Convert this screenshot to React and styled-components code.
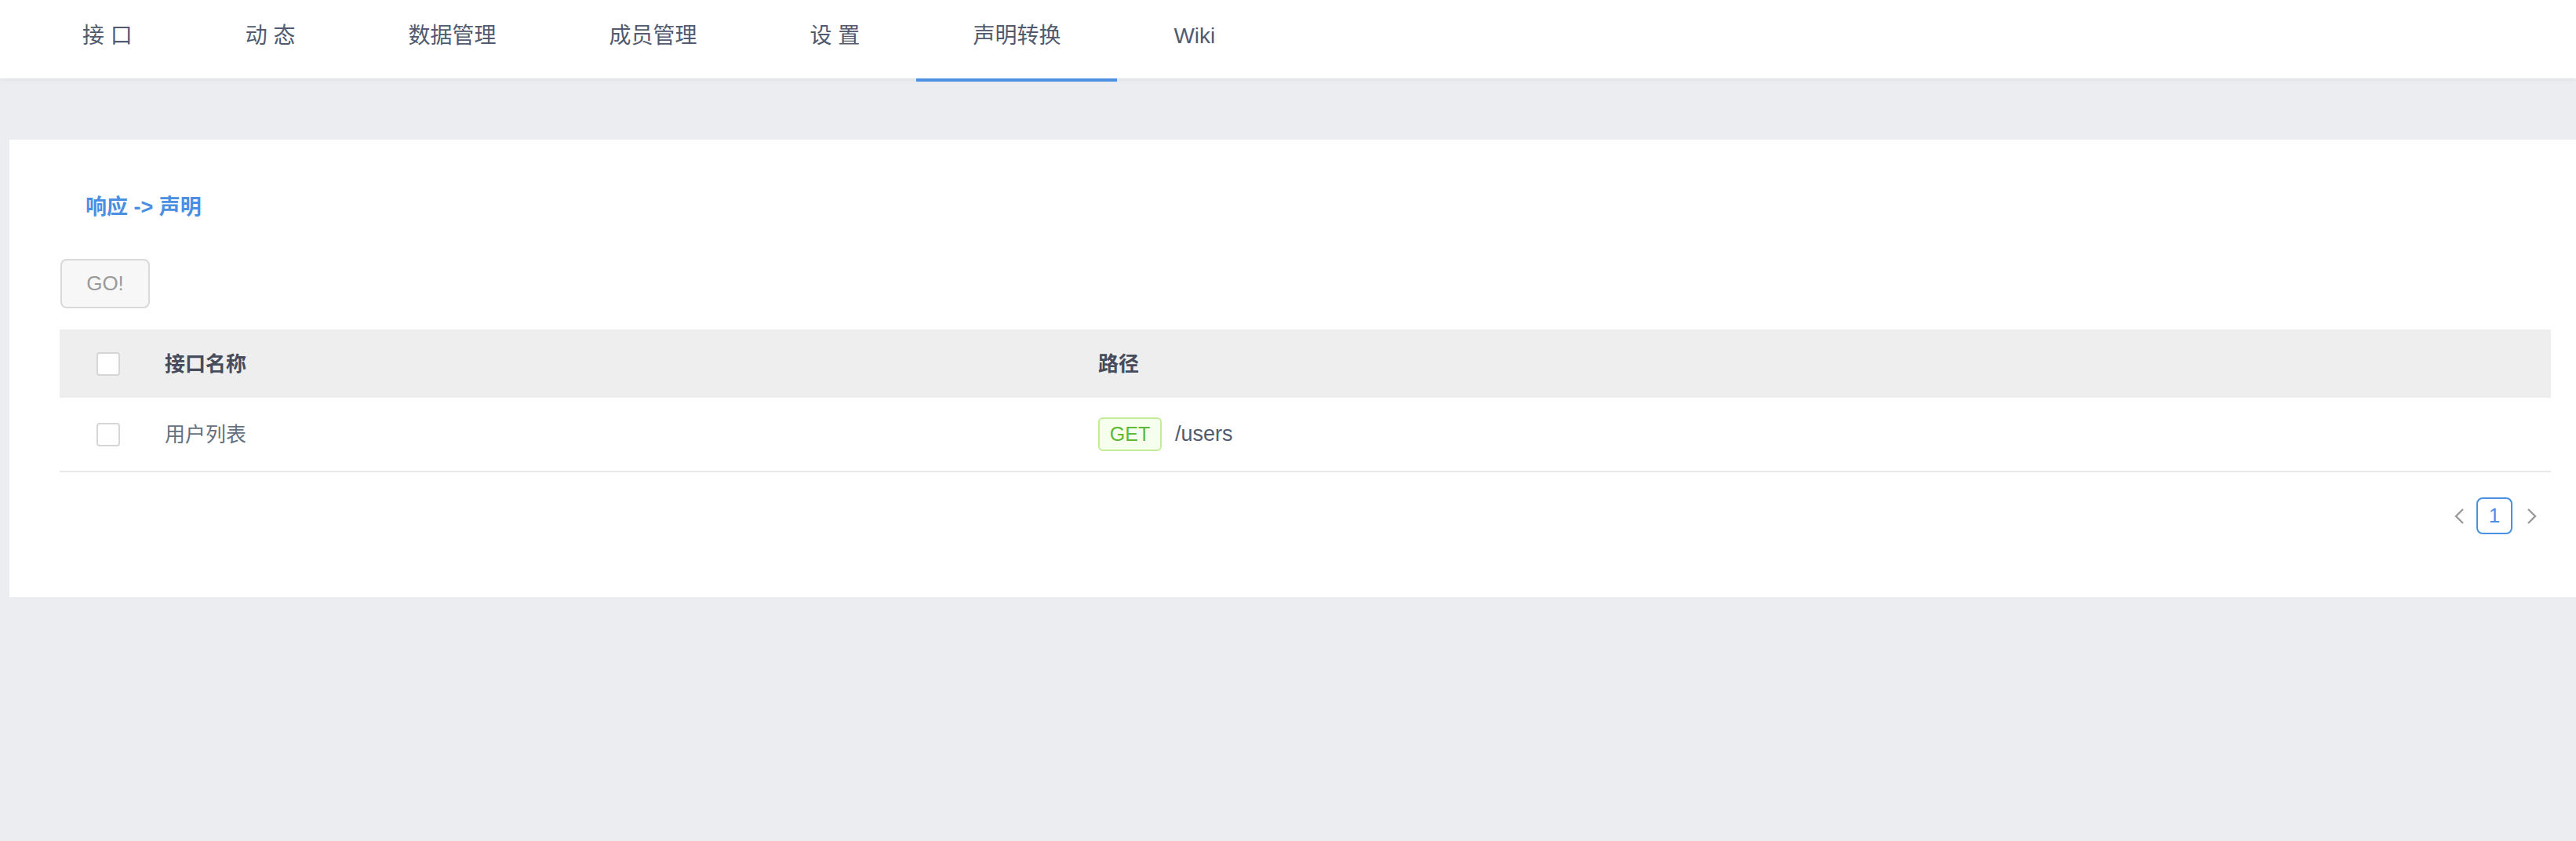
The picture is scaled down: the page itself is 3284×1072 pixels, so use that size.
import React from "react";
import styled, { createGlobalStyle } from "styled-components";

const GlobalStyle = createGlobalStyle`
  html, body {
    margin: 0;
    padding: 0;
    background: #ecedf1;
    font-family: "Liberation Sans", "Noto Sans CJK SC", sans-serif;
  }
  * { box-sizing: border-box; }
`;

const NavBar = styled.div`
  display: flex;
  align-items: flex-start;
  height: 100px;
  padding-left: 33px;
  background: #fff;
  box-shadow: 0 1px 6px rgba(0, 0, 0, 0.07);
  position: relative;
  z-index: 1;
`;

const NavItem = styled.div`
  height: 104px;
  padding: 0 72px;
  line-height: 92px;
  font-size: 28px;
  color: #515a6e;
  border-bottom: 4px solid ${(p) => (p.$active ? "#4a8fe2" : "transparent")};
  white-space: pre;
  cursor: pointer;
`;

const Main = styled.div`
  padding-top: 78px;
  min-height: 972px;
`;

const Card = styled.div`
  margin-left: 12px;
  background: #fff;
  padding: 68px 32px 80px 64px;
`;

const Title = styled.div`
  padding-left: 33px;
  font-size: 27px;
  line-height: 36px;
  font-weight: 700;
  color: #4a8fe2;
`;

const GoButton = styled.button`
  display: block;
  margin-top: 48px;
  width: 114px;
  height: 63px;
  margin-left: 1px;
  border: 2px solid #d9d9d9;
  border-radius: 8px;
  background: #f7f7f7;
  color: #9a9a9a;
  font-family: inherit;
  font-size: 26px;
  padding: 0;
`;

const Table = styled.div`
  margin-top: 27px;
`;

const Row = styled.div`
  display: grid;
  grid-template-columns: 134px 1190px 1fr;
  align-items: center;
  height: ${(p) => (p.$head ? "87px" : "95px")};
  background: ${(p) => (p.$head ? "#eeeeee" : "#fff")};
  border-bottom: ${(p) => (p.$head ? "none" : "2px solid #e8e8e8")};
  font-size: 26px;
  font-weight: ${(p) => (p.$head ? 700 : 400)};
  color: ${(p) => (p.$head ? "#464c5b" : "#657180")};
`;

const CheckCell = styled.div`
  padding-left: 47px;
  display: flex;
  align-items: center;
`;

const Checkbox = styled.span`
  display: block;
  width: 30px;
  height: 30px;
  border: 2px solid #d6d6d6;
  border-radius: 4px;
  background: #fff;
`;

const CellText = styled.div`
  margin-top: -4px;
`;

const PathCell = styled.div`
  display: flex;
  align-items: center;
  gap: 17px;
`;

const MethodTag = styled.span`
  display: inline-flex;
  align-items: center;
  justify-content: center;
  width: 81px;
  height: 43px;
  border: 2px solid #c3eb99;
  border-radius: 6px;
  background: #f6ffed;
  color: #5fb832;
  font-size: 25px;
`;

const PathText = styled.span`
  font-size: 27px;
  color: #515a6e;
`;

const Pager = styled.div`
  display: flex;
  justify-content: flex-end;
  align-items: center;
  margin-top: 32px;
  padding-right: 8px;
`;

const PageArrow = styled.span`
  display: flex;
  align-items: center;
  justify-content: center;
  width: 32px;
  height: 47px;
  margin: 0 ${(p) => (p.$next ? "0 0 9px" : "6px 0 0")};
`;

const PageItem = styled.span`
  display: flex;
  align-items: center;
  justify-content: center;
  width: 46px;
  height: 47px;
  border: 2px solid #4a8fe2;
  border-radius: 8px;
  color: #4a8fe2;
  font-size: 26px;
`;

const Chevron = ({ dir }) => (
  <svg width="16" height="22" viewBox="0 0 16 22">
    <path
      d={dir === "left" ? "M13 2 L4 11 L13 20" : "M3 2 L12 11 L3 20"}
      fill="none"
      stroke="#9a9a9a"
      strokeWidth="2.4"
    />
  </svg>
);

const tabs = ["接 口", "动 态", "数据管理", "成员管理", "设 置", "声明转换", "Wiki"];

const App = () => (
  <>
    <GlobalStyle />
    <NavBar>
      {tabs.map((t) => (
        <NavItem key={t} $active={t === "声明转换"}>
          {t}
        </NavItem>
      ))}
    </NavBar>
    <Main>
      <Card>
        <Title>响应 -&gt; 声明</Title>
        <GoButton disabled>GO!</GoButton>
        <Table>
          <Row $head>
            <CheckCell>
              <Checkbox />
            </CheckCell>
            <CellText>接口名称</CellText>
            <CellText>路径</CellText>
          </Row>
          <Row>
            <CheckCell>
              <Checkbox />
            </CheckCell>
            <CellText>用户列表</CellText>
            <PathCell>
              <MethodTag>GET</MethodTag>
              <PathText>/users</PathText>
            </PathCell>
          </Row>
        </Table>
        <Pager>
          <PageArrow>
            <Chevron dir="left" />
          </PageArrow>
          <PageItem>1</PageItem>
          <PageArrow $next>
            <Chevron dir="right" />
          </PageArrow>
        </Pager>
      </Card>
    </Main>
  </>
);

export default App;
